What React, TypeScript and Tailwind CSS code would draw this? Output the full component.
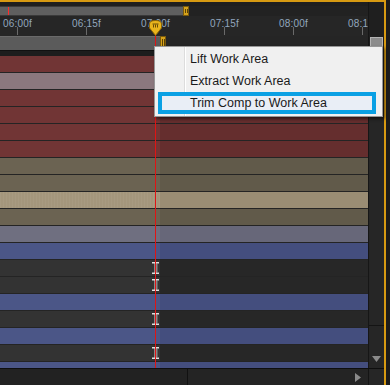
import React from "react";

type Row = { l: string; r: string; beam?: boolean; grain?: boolean };

const RED: Row = { l: "#713535", r: "#652e2e" };
const TAN: Row = { l: "#6b6352", r: "#615a4a" };
const BLUE: Row = { l: "#4b5687", r: "#444e7e" };
const DARK: Row = { l: "#333333", r: "#272727", beam: true };

const rows: Row[] = [
  RED,
  { l: "#8b787e", r: "#7f6e74" },
  RED,
  RED,
  RED,
  RED,
  TAN,
  TAN,
  { l: "#a4967c", r: "#9a8d74", grain: true },
  TAN,
  { l: "#6f6f80", r: "#676779" },
  BLUE,
  DARK,
  DARK,
  BLUE,
  DARK,
  BLUE,
  DARK,
  BLUE,
];

const labels = ["06:00f", "06:15f", "07:00f", "07:15f", "08:00f", "08:1"];

function Handle({ className }: { className: string }) {
  return (
    <div className={`flex items-center justify-center gap-[1px] bg-[#d6a21a] border border-[#7a5a0c] ${className}`}>
      <div className="w-px h-[60%] bg-[#5a4208]" />
      <div className="w-px h-[60%] bg-[#5a4208]" />
    </div>
  );
}

function IBeam() {
  return (
    <svg className="absolute left-[152px] top-[2px]" width="8" height="12" viewBox="0 0 8 12">
      <rect x="0" y="0" width="7" height="1.5" fill="#dedede" />
      <rect x="0" y="10.5" width="7" height="1.5" fill="#dedede" />
      <rect x="2.5" y="0" width="2" height="12" fill="#dedede" />
      <rect x="4.5" y="1.5" width="1" height="9" fill="#8a8a8a" />
    </svg>
  );
}

function MenuItem({ label, active }: { label: string; active?: boolean }) {
  if (active) {
    return (
      <div className="h-[22px] ml-[3px] mr-[6px] border-[4px] border-[#0aa0e4] bg-[#e9eef6] flex items-center pl-[28px] text-[#1a1a1a]">
        {label}
      </div>
    );
  }
  return <div className="h-[22px] flex items-center pl-[35px] text-[#1a1a1a]">{label}</div>;
}

export default function App() {
  return (
    <div className="relative w-[390px] h-[385px] bg-[#1c1c1c] overflow-hidden" style={{ fontFamily: '"Liberation Sans", Arial, sans-serif' }}>
      <div className="w-[386px] h-[385px] border-t-2 border-r-2 border-[#d79a12] flex flex-col">
        <div className="flex h-[366px]">
          {/* main timeline column */}
          <div className="w-[368px] flex flex-col">
            <div className="h-[4px] bg-[#1f1f1f]" />
            {/* navigator */}
            <div className="h-[10px] flex bg-[#222222]">
              <div className="relative w-[183px] bg-[#5f5f5f] border-y border-[#3a3a3a]">
                <div className="absolute left-[8px] top-0 bottom-0 w-px bg-[#ff2a2a]" />
              </div>
              <Handle className="w-[6px]" />
            </div>
            {/* ruler */}
            <div className="h-[20px] bg-[#262626] flex pl-[3px] overflow-hidden">
              {labels.map((t) => (
                <div key={t} className="relative w-[69px] shrink-0">
                  <div className="text-[10px] leading-none mt-[3px] text-[#92a7be] tracking-[0.2px]">{t}</div>
                  <div className="absolute left-[14px] top-[11px] w-px h-[8px] bg-[#6a6a6a]" />
                </div>
              ))}
            </div>
            {/* work area bar */}
            <div className="h-[14px] flex bg-[#252525]">
              <div className="w-[160px] bg-[#5b5b5b] border-t border-[#6a6a6a]" />
              <Handle className="w-[6px]" />
            </div>
            <div className="h-[6px] bg-[#1d1d1d] border-t border-[#111]" />
            {/* layer rows */}
            <div className="h-[312px] overflow-hidden">
              {rows.map((r, i) => (
                <div key={i} className="relative h-[17px] flex border-b border-[#242424]">
                  <div
                    className="w-[160px]"
                    style={{
                      background: r.l,
                      backgroundImage: r.grain
                        ? "repeating-linear-gradient(90deg, rgba(255,255,255,0.04) 0 1px, transparent 1px 3px)"
                        : undefined,
                    }}
                  />
                  <div className="flex-1" style={{ background: r.r }} />
                  {r.beam && <IBeam />}
                </div>
              ))}
            </div>
          </div>
          {/* vertical scroll column */}
          <div className="w-[16px] flex flex-col bg-[#1f1f1f] border-l border-[#161616]">
            <div className="h-[35px]" />
            <div className="h-[11px] mx-[1px] bg-[#8c8c8c] border border-[#b4b4b4]" />
            <div className="h-[2px]" />
            <div className="h-[276px] bg-[#262626] border-b border-[#141414]" />
            <div className="flex-1 bg-[#262626] flex items-end justify-center pb-[6px]">
              <svg width="9" height="6" viewBox="0 0 9 6">
                <path d="M0 0 H9 L4.5 6 Z" fill="#8a8a8a" />
              </svg>
            </div>
          </div>
        </div>
        {/* bottom bar */}
        <div className="flex-1 flex border-t border-[#0e0e0e]">
          <div className="w-[188px] bg-[#222222] border-r border-[#111]" />
          <div className="w-[180px] bg-[#242424] flex items-center justify-end pr-[7px]">
            <svg width="6" height="9" viewBox="0 0 6 9">
              <path d="M0 0 V9 L6 4.5 Z" fill="#8a8a8a" />
            </svg>
          </div>
          <div className="flex-1 bg-[#262626] border-l border-[#141414]" />
        </div>
      </div>

      {/* playhead line */}
      <div className="absolute left-[155px] top-[34px] h-[334px] w-px bg-[#e01414]" />
      {/* playhead head */}
      <svg className="absolute left-[149px] top-[20px]" width="13" height="16" viewBox="0 0 13 16">
        <path d="M0.5 4 Q0.5 0.5 6.5 0.5 Q12.5 0.5 12.5 4 L12.5 8 L6.5 15.5 L0.5 8 Z" fill="#e9b41c" stroke="#8a6508" />
        <rect x="3.5" y="3.5" width="6" height="1" fill="#6a4c06" />
        <rect x="4" y="4.5" width="1" height="3" fill="#6a4c06" />
        <rect x="6" y="4.5" width="1" height="3" fill="#6a4c06" />
        <rect x="8" y="4.5" width="1" height="3" fill="#6a4c06" />
      </svg>

      {/* context menu */}
      <div className="absolute left-[154px] top-[46px] w-[229px] h-[71px] bg-[#f0f0f0] border border-[#979797] shadow-[2px_2px_3px_rgba(0,0,0,0.55)] pt-[1px] text-[12.5px]">
        <div className="absolute left-[29px] top-0 bottom-0 w-px bg-[#dcdcdc]" />
        <div className="absolute left-[30px] top-0 bottom-0 w-px bg-white" />
        <div className="relative">
          <MenuItem label="Lift Work Area" />
          <MenuItem label="Extract Work Area" />
          <MenuItem label="Trim Comp to Work Area" active />
        </div>
      </div>
    </div>
  );
}
